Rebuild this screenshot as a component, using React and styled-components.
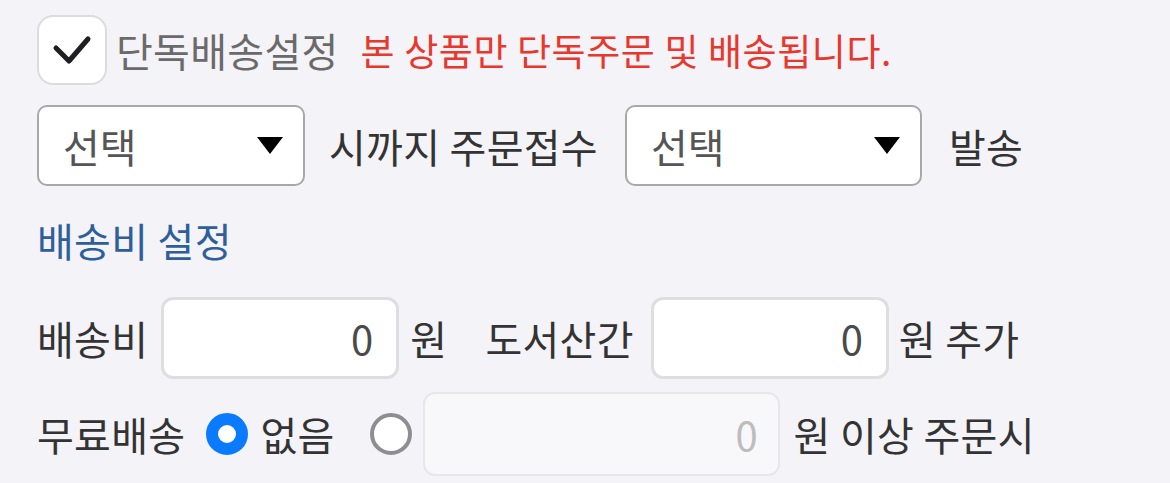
import React from "react";
import styled, { createGlobalStyle } from "styled-components";

const GlobalStyle = createGlobalStyle`
  html, body {
    margin: 0;
    padding: 0;
    background: #f4f3f8;
  }
  body {
    font-family: "Noto Sans CJK KR", "Noto Sans", sans-serif;
  }
`;

export default function App() {
  return (
    <>
      <GlobalStyle />
      <Container>
        <Row $height={70}>
          <CheckBox>
            <svg width="40" height="32" viewBox="0 0 40 32">
              <path
                d="M4 13 L17 26 L36 4"
                fill="none"
                stroke="#1f1f22"
                strokeWidth="5"
                strokeLinecap="round"
                strokeLinejoin="round"
              />
            </svg>
          </CheckBox>
          <Label $color="#6a6a6a" $ml={9}>단독배송설정</Label>
          <Notice>본 상품만 단독주문 및 배송됩니다.</Notice>
        </Row>

        <Row $height={81} $mt={20}>
          <Select $width={268}>
            <span>선택</span>
            <Arrow />
          </Select>
          <Label $ml={24}>시까지 주문접수</Label>
          <Select $width={297} $ml={27}>
            <span>선택</span>
            <Arrow />
          </Select>
          <Label $ml={27}>발송</Label>
        </Row>

        <SectionTitle>배송비 설정</SectionTitle>

        <Row $height={82} $mt={32}>
          <Label>배송비</Label>
          <AmountInput $width={238} $ml={13} value="0" readOnly />
          <Label $ml={11}>원</Label>
          <Label $ml={38}>도서산간</Label>
          <AmountInput $width={238} $ml={17} value="0" readOnly />
          <Label $ml={10}>원 추가</Label>
        </Row>

        <Row $height={84} $mt={13}>
          <Label>무료배송</Label>
          <Radio $checked $ml={21} />
          <Label $ml={12}>없음</Label>
          <Radio $ml={35} />
          <AmountInput $width={357} $ml={11} $disabled value="0" disabled readOnly />
          <Label $ml={14}>원 이상 주문시</Label>
        </Row>
      </Container>
    </>
  );
}

const Container = styled.div`
  display: flex;
  flex-direction: column;
  padding: 15px 0 0 37px;
`;

const Row = styled.div`
  display: flex;
  flex-direction: row;
  align-items: center;
  height: ${(p) => p.$height}px;
  margin-top: ${(p) => p.$mt || 0}px;
`;

const CheckBox = styled.div`
  width: 70px;
  height: 70px;
  box-sizing: border-box;
  border: 2px solid #dcdcdf;
  border-radius: 16px;
  background: #ffffff;
  display: flex;
  align-items: center;
  justify-content: center;
  padding-top: 2px;
`;

const Label = styled.span`
  font-size: 40px;
  line-height: 1;
  letter-spacing: 0.3px;
  color: ${(p) => p.$color || "#333333"};
  margin-left: ${(p) => p.$ml || 0}px;
  white-space: nowrap;
`;

const Notice = styled.span`
  font-size: 37px;
  line-height: 1;
  letter-spacing: 0.6px;
  color: #e8372c;
  margin-left: 22px;
  white-space: nowrap;
`;

const Select = styled.div`
  width: ${(p) => p.$width}px;
  height: 81px;
  box-sizing: border-box;
  border: 2px solid #a8a8a8;
  border-radius: 10px;
  background: #ffffff;
  display: flex;
  align-items: center;
  justify-content: space-between;
  padding: 0 20px 0 24px;
  margin-left: ${(p) => p.$ml || 0}px;
  font-size: 40px;
  color: #555555;
`;

const Arrow = styled.span`
  width: 0;
  height: 0;
  border-left: 13px solid transparent;
  border-right: 13px solid transparent;
  border-top: 17px solid #000000;
`;

const SectionTitle = styled.div`
  font-size: 40px;
  line-height: 50px;
  height: 50px;
  margin-top: 29px;
  letter-spacing: 0.3px;
  color: #2f5f9b;
`;

const AmountInput = styled.input`
  width: ${(p) => p.$width}px;
  height: ${(p) => (p.$disabled ? 84 : 82)}px;
  box-sizing: border-box;
  margin: 0 0 0 ${(p) => p.$ml || 0}px;
  border: ${(p) => (p.$disabled ? "2px solid #e7e7ea" : "3px solid #dedee0")};
  border-radius: 12px;
  background: ${(p) => (p.$disabled ? "#f8f8fa" : "#ffffff")};
  color: ${(p) => (p.$disabled ? "#bdbdbd" : "#4a4a4a")};
  -webkit-text-fill-color: ${(p) => (p.$disabled ? "#bdbdbd" : "#4a4a4a")};
  opacity: 1;
  font-family: "Noto Sans CJK KR", "Noto Sans", sans-serif;
  font-size: 40px;
  text-align: right;
  padding: 0 ${(p) => (p.$disabled ? 20 : 23)}px 0 10px;
  outline: none;
`;

const Radio = styled.span`
  width: 42px;
  height: 42px;
  box-sizing: border-box;
  border-radius: 50%;
  margin-left: ${(p) => p.$ml || 0}px;
  background: #ffffff;
  border: ${(p) => (p.$checked ? "12px solid #0a7bff" : "4px solid #8e8e92")};
  flex-shrink: 0;
`;
